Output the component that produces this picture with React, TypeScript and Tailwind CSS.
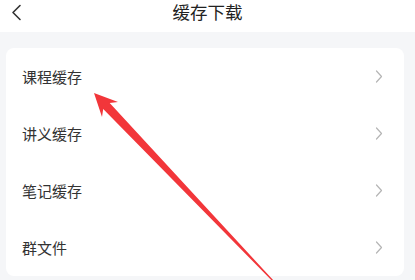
import React from "react";

const items = ["课程缓存", "讲义缓存", "笔记缓存", "群文件"];

export default function App() {
  return (
    <div
      className="relative w-[415px] h-[280px] overflow-hidden bg-[#f5f6f8]"
      style={{ fontFamily: '"Noto Sans CJK SC", "Noto Sans", sans-serif' }}
    >
      <div className="relative h-[32px] bg-white flex items-center justify-center">
        <svg
          className="absolute left-[10px] top-[4px]"
          width="14"
          height="17"
          viewBox="0 0 14 17"
          fill="none"
        >
          <path d="M10 1.5 L3 8.5 L10 15.5" stroke="#333" strokeWidth="1.6" strokeLinecap="round" strokeLinejoin="round" />
        </svg>
        <span className="text-[17.5px] leading-none text-[#222] -mt-[8px]">缓存下载</span>
      </div>
      <div className="mt-[16px] ml-[6px] w-[398px] bg-white rounded-[8px] flex flex-col">
        {items.map((t) => (
          <div key={t} className="h-[57px] flex items-center justify-between pl-[16px] pr-[21px]">
            <span className="text-[15px] text-[#333] leading-none">{t}</span>
            <svg width="8" height="13" viewBox="0 0 8 13" fill="none">
              <path d="M1.5 1 L6.5 6.5 L1.5 12" stroke="#b5b5b5" strokeWidth="1.2" strokeLinecap="round" strokeLinejoin="round" />
            </svg>
          </div>
        ))}
      </div>
      <svg className="absolute left-0 top-0 pointer-events-none" width="415" height="280" viewBox="0 0 415 280">
        <polygon
          points="94,93 118,102 109.7,102.9 274,281 272.6,281.4 103.2,109.1 102,117"
          fill="#f2363a"
        />
      </svg>
    </div>
  );
}
